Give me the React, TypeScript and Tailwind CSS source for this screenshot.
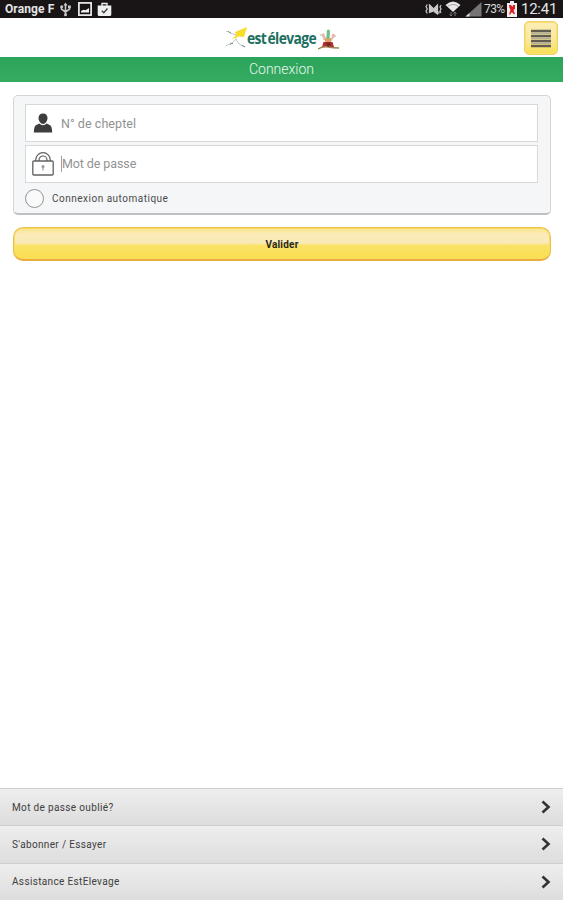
import { useState } from 'react';

const LINKS = ['Mot de passe oublié?', "S'abonner / Essayer", 'Assistance EstElevage'];

function StatusBar() {
  return (
    <div className="flex h-[18px] shrink-0 items-center justify-between bg-[#191516] pl-[5px] pr-[5px] text-[#e4e4e4]">
      <div className="flex items-center">
        <span className="w-[55px] whitespace-nowrap text-[12px] font-bold leading-[18px] tracking-[0.1px]">Orange F</span>
        {/* USB */}
        <svg width="11" height="15" viewBox="0 0 11 15" fill="none" stroke="#c9c9c9" strokeWidth="1.6">
          <path d="M5.5 2v10M1.5 5v2.200L5.500 10M9.500 4.500v2.700L5.500 10" />
          <path d="M5.500 0.500 7.500 3.500h-4z" fill="#c9c9c9" stroke="none" />
          <circle cx="5.500" cy="12.700" r="1.500" fill="#c9c9c9" stroke="none" />
          <circle cx="1.700" cy="4.800" r="1.500" fill="#c9c9c9" stroke="none" />
          <rect x="8" y="3.500" width="2.800" height="2.600" fill="#c9c9c9" stroke="none" />
        </svg>
        {/* Picture */}
        <svg className="ml-[7px]" width="14" height="14" viewBox="0 0 14 14" fill="none">
          <rect x="0.900" y="0.900" width="12.200" height="12.200" stroke="#f0f0f0" strokeWidth="1.700" />
          <path d="M3 10.500V9l2.500-1.200 2 .5L11 6v4.500z" fill="#f0f0f0" />
        </svg>
        {/* Store bag */}
        <svg className="ml-[5px]" width="15" height="15" viewBox="0 0 15 15" fill="none">
          <path d="M5 4V1.500h5V4" stroke="#f0f0f0" strokeWidth="1.300" />
          <path d="M0.700 3.500h13.600v9q0 1.500-1.500 1.500H2.200q-1.500 0-1.500-1.500z" fill="#f0f0f0" />
          <path d="m4.800 8.700 2 2L10.500 6.500" stroke="#454141" strokeWidth="1.400" />
        </svg>
      </div>
      <div className="flex items-center">
        {/* Vibrate / mute */}
        <svg width="17" height="12" viewBox="0 0 17 12" fill="none" stroke="#cacaca" strokeWidth="1.200">
          <path d="M2.300 1.500 1 3.500l1.300 2.500L1 8l1.300 2.500M14 8.500v2M16 2l-1 2 1 2-1 2 1 2" />
          <path d="M4.500 10V2.500l5 5.500V5l3-3v9L9 8.500" fill="#cacaca" />
          <path d="m4 1.500 9.500 9" />
        </svg>
        {/* Wifi */}
        <svg className="ml-[3px]" width="16" height="16" viewBox="0 0 16 16">
          <path d="M0.500 4Q8-3 15.500 4L8 11z" fill="#e8e8e8" />
          <path d="M2.500 5.500q5.500-4 11 0" fill="none" stroke="#8a8888" strokeWidth="0.700" />
          <path d="M6 11v4M4.500 13.500 6 15l1.500-1.500M10 15v-4M8.500 12.500 10 11l1.500 1.500" fill="none" stroke="#777" strokeWidth="1" />
        </svg>
        {/* Signal */}
        <svg className="ml-[4px]" width="17" height="16" viewBox="0 0 17 16">
          <path d="M0.500 15.500 16.500 1v14.500z" fill="#777475" />
          <path d="m0.500 15.500 4-3.600v3.600z" fill="#ddd" />
        </svg>
        <span className="ml-[2px] w-[23px] whitespace-nowrap text-[12px] leading-[18px] tracking-[-0.6px] text-[#d6d6d6]">73%</span>
        {/* Battery */}
        <svg width="10" height="16" viewBox="0 0 10 16">
          <path d="M3 0h4v2h3v14H0V2h3z" fill="#f3eded" />
          <path d="M2 4h2l1.500 2L6 4h2v4L6.500 9 8 13H6.500L5 11l-2 2.500H2L3.500 9 2.500 7z" fill="#d51f24" />
        </svg>
        <span className="ml-[4px] w-[37px] whitespace-nowrap text-[15px] leading-[18px] tracking-[-0.25px]">12:41</span>
      </div>
    </div>
  );
}

function Logo() {
  return (
    <div className="flex h-[26px] w-[114px] items-center">
      <svg className="shrink-0" width="23" height="26" viewBox="0 0 23 26" fill="none">
        <path d="m10 7 12-5-3 10-5-.5-7 3L11 10z" fill="#f5dc35" />
        <path d="m12 7 4 1 5-5-3 7-4 1z" fill="#fbe01b" />
        <path d="M1 6.500q3-1 4 1.500l6 2M0.500 21l7-3.500 4-4M11 14q2 6 9 8" stroke="#b5c2bf" strokeWidth="0.900" />
        <path d="m5 20 2-2 1 1M3 6.500l3 1.500M17 20l3 2" stroke="#78958f" strokeWidth="1" />
      </svg>
      <span className="w-[70px] shrink-0 pt-[2px]">
        <span className="-ml-px inline-block origin-left scale-x-[0.865] whitespace-nowrap font-['Open_Sans',sans-serif] text-[16px] font-bold leading-[20px] tracking-[-0.7px] text-[#1d6f60] [word-spacing:-2px]">
          est élevage
        </span>
      </span>
      <svg className="shrink-0" width="22" height="26" viewBox="0 0 22 26" fill="none">
        <path d="M2 10q3-1 4 5M18 11q-4 1-5 5" stroke="#bfd5ca" strokeWidth="1.500" />
        <path d="M9 5q2.500-1.500 3 1l-.5 10H8z" fill="#72bd8d" />
        <path d="m4 9 2-1 3 8-3-1zM14 9q3-1 3 2l-4 5z" fill="#edb5aa" />
        <path d="m7 14 6-1v5H7z" fill="#dfa15e" />
        <path d="M5.500 17h9l1.500 5H4z" fill="#b92a30" />
        <path d="M0 24q5-3 10-2t11 1" stroke="#a18455" strokeWidth="1.400" />
        <path d="m8 18 3-1 2 3-3 2z" fill="#6f2d28" />
      </svg>
    </div>
  );
}

function Header() {
  return (
    <header className="grid h-[39px] shrink-0 grid-cols-[1fr_114px_1fr] items-center bg-white">
      <div />
      <Logo />
      <button
        aria-label="Menu"
        className="mr-[5px] mt-px flex h-[34px] w-[34px] items-center justify-center justify-self-end rounded-[5px] border border-[#f0d068] bg-gradient-to-b from-[#fbeeb6] via-[#fae99c] to-[#f8df4c] shadow-[inset_0_0_0_1px_#fbdf75]"
      >
        <svg width="20" height="19" viewBox="0 0 20 19">
          <path d="M0 2h20M0 7h20M0 12h20M0 17h20" stroke="#625f52" strokeWidth="2.600" />
          <path d="M0 4.200h20M0 9.200h20M0 14.200h20" stroke="#b5b096" strokeWidth="1.800" />
        </svg>
      </button>
    </header>
  );
}

function UserIcon() {
  return (
    <svg width="20" height="20" viewBox="0 0 20 20" fill="#3c3d3e">
      <path d="M10 .5c3 0 4.500 1.800 4.500 4.500S12.500 11 10 11 5.500 7.700 5.500 5 7 .5 10 .5z" />
      <path d="M6.200 10.500Q10 14 13.800 10.500L17.500 12.500Q19 14 19.200 19.500H.8Q1 14 2.500 12.500z" />
    </svg>
  );
}

function LockIcon() {
  return (
    <svg width="22" height="24" viewBox="0 0 22 24" fill="none" stroke="#606163">
      <path d="M3.700 9V8a7.300 7.300 0 0 1 14.600 0v1M7 9V8a4 4 0 0 1 8 0v1" strokeWidth="1.200" />
      <rect x="0.800" y="9" width="20.400" height="14" rx="1" strokeWidth="1.300" />
      <circle cx="11" cy="14.500" r="1.500" fill="#9a9a9a" stroke="none" />
      <path d="M11 15v3.500" stroke="#9a9a9a" strokeWidth="1.200" />
    </svg>
  );
}

export default function App() {
  const [isAuto, setIsAuto] = useState(false);

  return (
    <div className="flex h-[900px] w-[563px] flex-col overflow-hidden bg-white font-['Roboto',sans-serif]">
      <StatusBar />
      <Header />
      <h1 className="h-[25px] shrink-0 bg-gradient-to-b from-[#2ca45b] to-[#36aa61] text-center text-[14px] font-light leading-[25px] text-[#e9f8ee]">
        Connexion
      </h1>

      <main className="flex flex-1 flex-col px-[13px] pt-[13px]">
        <form className="mr-[-1px] h-[120px] rounded-[5px] border border-b-2 border-[#d4d5d6] border-b-[#bfc0c1] bg-[#f5f6f7] pl-[11px] pr-[12px] pt-[8px]">
          <label className="flex h-[38px] items-center border border-[#d8d8d8] bg-white pl-[7px]">
            <UserIcon />
            <span className="ml-[8px] pt-[2px] text-[12.5px] tracking-[0.06px] text-[#929292]">N° de cheptel</span>
          </label>
          <label className="mt-[3px] flex h-[38px] items-center border border-[#d8d8d8] bg-white pl-[6px]">
            <LockIcon />
            <span className="ml-[7px] h-[16px] w-px bg-[#a0a0a0]" />
            <span className="text-[12.5px] tracking-[-0.1px] text-[#929292]">Mot de passe</span>
          </label>
          <button
            type="button"
            role="radio"
            aria-checked={isAuto}
            onClick={() => setIsAuto(!isAuto)}
            className="mt-[6px] flex h-[19px] items-center"
          >
            <span className="flex h-[19px] w-[19px] items-center justify-center rounded-full border border-[#929394] bg-[#fafafa]">
              {isAuto && <span className="h-[9px] w-[9px] rounded-full bg-[#36aa61]" />}
            </span>
            <span className="ml-[8px] text-[10px] tracking-[0.5px] text-[#4a4a4a]">Connexion automatique</span>
          </button>
        </form>
        <button className="mr-[-1px] mt-[12px] h-[34px] rounded-[10px] border border-b-2 border-[#ebc04b] border-b-[#e9ad39] bg-[linear-gradient(#fae58b_0%,#faebb8_20%,#f9ebb9_48%,#fae267_56%,#fade50_100%)] pt-[2px] text-[10px] font-bold tracking-[0.22px] text-[#29271d] shadow-[inset_0_0_0_1px_#fadc62]">
          Valider
        </button>
      </main>

      <nav className="flex h-[112px] shrink-0 flex-col">
        {LINKS.map((link) => (
          <a
            key={link}
            href="#"
            className="flex flex-1 items-center justify-between border-t border-[#cfcfcf] bg-gradient-to-b from-[#eeeeee] to-[#dddddd] pl-[12px] pr-[12px] text-[10px] tracking-[0.35px] text-[#404040]"
          >
            {link}
            <svg width="10" height="14" viewBox="0 0 10 14" fill="none" stroke="#333333" strokeWidth="2.600">
              <path d="m1.500 1.500 6 5.500-6 5.500" />
            </svg>
          </a>
        ))}
      </nav>
    </div>
  );
}
